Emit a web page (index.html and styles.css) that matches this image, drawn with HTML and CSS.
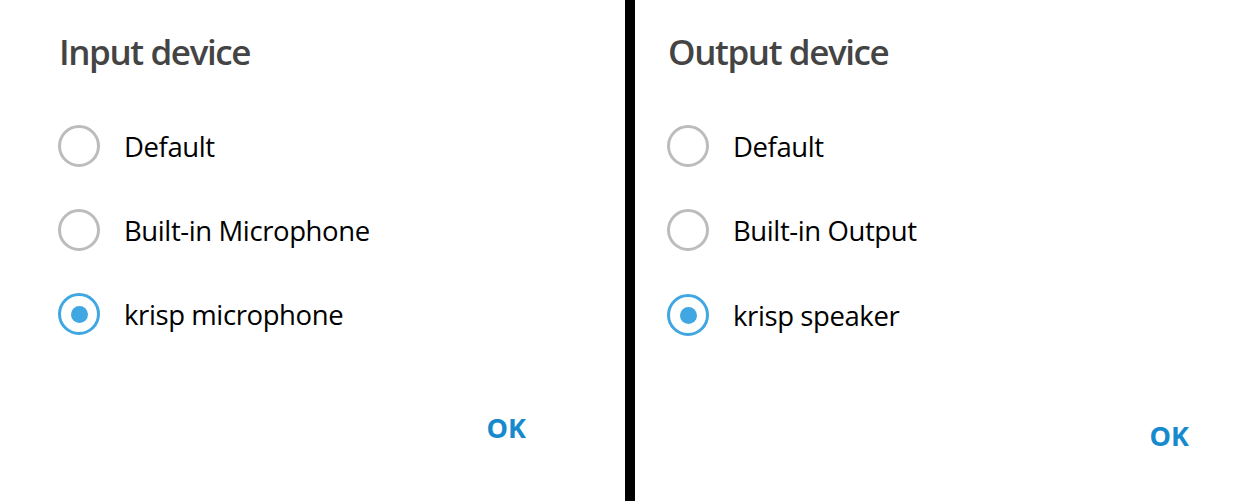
FILE: index.html
```html
<!DOCTYPE html>
<html lang="en">
  <head>
    <meta charset="UTF-8" />
    <title>Device settings</title>
    <link rel="stylesheet" href="styles.css">
  </head>
  <body>
    <div class="box box-input">
      <h2 class="box-title">Input device</h2>
      <ul class="options">
        <li class="option"><span class="radio"></span>Default</li>
        <li class="option"><span class="radio"></span>Built-in Microphone</li>
        <li class="option"><span class="radio checked"></span>krisp microphone</li>
      </ul>
      <div class="buttons">
        <button class="btn">OK</button>
      </div>
    </div>

    <div class="divider"></div>

    <div class="box box-output">
      <h2 class="box-title">Output device</h2>
      <ul class="options">
        <li class="option"><span class="radio"></span>Default</li>
        <li class="option"><span class="radio"></span>Built-in Output</li>
        <li class="option"><span class="radio checked"></span>krisp speaker</li>
      </ul>
      <div class="buttons">
        <button class="btn">OK</button>
      </div>
    </div>
  </body>
</html>
```

FILE: styles.css
```css
* {
  box-sizing: border-box;
}
html,
body {
  height: 100%;
}
body {
  margin: 0;
  display: flex;
  font-family: "Open Sans", "DejaVu Sans", sans-serif;
  color: #000;
  background-color: #fff;
}
.box {
  padding-top: 30px;
}
.box-input {
  width: 625px;
  padding-left: 58px;
  padding-right: 99px;
}
.box-output {
  flex: 1;
  padding-left: 32px;
  padding-right: 45px;
}
.divider {
  width: 10px;
  background-color: #000;
}
.box-title {
  margin: 0 0 0 1px;
  font-size: 35px;
  line-height: 44px;
  letter-spacing: -1.4px;
  font-weight: 600;
  color: #444;
}
.options {
  list-style: none;
  margin: 30px 0 0;
  padding: 0;
}
.option {
  display: flex;
  align-items: center;
  height: 84px;
  font-size: 27.5px;
  letter-spacing: -0.4px;
}
.box-output .option:last-child {
  margin-top: 1px;
}
.radio {
  width: 42px;
  height: 42px;
  margin-right: 24px;
  border: 3px solid #bcbcbc;
  border-radius: 50%;
  display: flex;
  align-items: center;
  justify-content: center;
  flex-shrink: 0;
}
.radio.checked {
  border-color: #40a7e3;
}
.radio.checked::after {
  content: "";
  width: 17px;
  height: 17px;
  border-radius: 50%;
  background-color: #40a7e3;
}
.buttons {
  display: flex;
  justify-content: flex-end;
  margin-top: 52px;
}
.box-output .buttons {
  margin-top: 59px;
}
.btn {
  border: 0;
  background: none;
  padding: 0;
  font-family: inherit;
  font-size: 27px;
  line-height: 40px;
  font-weight: 700;
  color: #168acd;
}
```
